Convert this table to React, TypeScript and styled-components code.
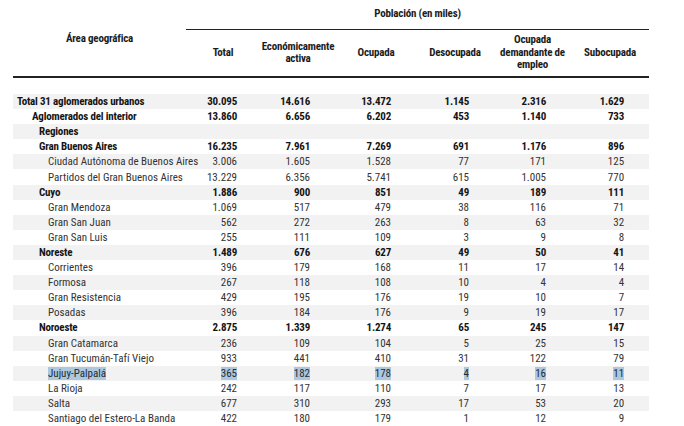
import React from "react";
import styled, { createGlobalStyle } from "styled-components";

const Global = createGlobalStyle`
  html, body {
    margin: 0;
    background: #fff;
  }
  body {
    font-family: Roboto, "Open Sans", "Liberation Sans", sans-serif;
    font-stretch: 75%;
    color: #2b2b2b;
  }
`;

const Page = styled.div`
  padding: 0 0 0 13px;
`;

const Table = styled.table`
  border-collapse: collapse;
  table-layout: fixed;
  width: 636px;
  font-size: 11px;
`;

const HeadCell = styled.th<{ $top?: boolean }>`
  font-weight: bold;
  letter-spacing: -0.2px;
  color: #1c1c1c;
  text-align: center;
  vertical-align: middle;
  line-height: 12.5px;
  padding: 0;
  height: ${(p) => (p.$top ? "29px" : "46px")};
  border-bottom: ${(p) => (p.$top ? "1px solid #222" : "2px solid #222")};
`;

const AreaHead = styled.th`
  font-weight: bold;
  letter-spacing: -0.2px;
  color: #1c1c1c;
  text-align: center;
  vertical-align: middle;
  padding: 0;
  border-bottom: 2px solid #222;
`;

const Spacer = styled.tr`
  height: 17px;
`;

const Row = styled.tr<{ $bold?: boolean }>`
  height: 15.1px;
  font-weight: ${(p) => (p.$bold ? "bold" : "normal")};
  letter-spacing: ${(p) => (p.$bold ? "-0.2px" : "0")};
  color: ${(p) => (p.$bold ? "#151515" : "#333")};
  &:nth-child(even) {
    background: #f2f2f2;
  }
`;

const Label = styled.td<{ $level: number }>`
  padding: 0 0 0 ${(p) => [4, 19, 26, 35][p.$level]}px;
  white-space: nowrap;
  line-height: 15px;
`;

const Num = styled.td<{ $pad: number }>`
  text-align: right;
  padding: 0 ${(p) => p.$pad}px 0 0;
  line-height: 15px;
`;

const Mark = styled.span`
  background: #adc8dd;
  color: #1f2b36;
`;

type Item = {
  label: string;
  level: number;
  bold?: boolean;
  marked?: boolean;
  values: string[];
};

const rows: Item[] = [
  { label: "Total 31 aglomerados urbanos", level: 0, bold: true, values: ["30.095", "14.616", "13.472", "1.145", "2.316", "1.629"] },
  { label: "Aglomerados del interior", level: 1, bold: true, values: ["13.860", "6.656", "6.202", "453", "1.140", "733"] },
  { label: "Regiones", level: 2, bold: true, values: [] },
  { label: "Gran Buenos Aires", level: 2, bold: true, values: ["16.235", "7.961", "7.269", "691", "1.176", "896"] },
  { label: "Ciudad Autónoma de Buenos Aires", level: 3, values: ["3.006", "1.605", "1.528", "77", "171", "125"] },
  { label: "Partidos del Gran Buenos Aires", level: 3, values: ["13.229", "6.356", "5.741", "615", "1.005", "770"] },
  { label: "Cuyo", level: 2, bold: true, values: ["1.886", "900", "851", "49", "189", "111"] },
  { label: "Gran Mendoza", level: 3, values: ["1.069", "517", "479", "38", "116", "71"] },
  { label: "Gran San Juan", level: 3, values: ["562", "272", "263", "8", "63", "32"] },
  { label: "Gran San Luis", level: 3, values: ["255", "111", "109", "3", "9", "8"] },
  { label: "Noreste", level: 2, bold: true, values: ["1.489", "676", "627", "49", "50", "41"] },
  { label: "Corrientes", level: 3, values: ["396", "179", "168", "11", "17", "14"] },
  { label: "Formosa", level: 3, values: ["267", "118", "108", "10", "4", "4"] },
  { label: "Gran Resistencia", level: 3, values: ["429", "195", "176", "19", "10", "7"] },
  { label: "Posadas", level: 3, values: ["396", "184", "176", "9", "19", "17"] },
  { label: "Noroeste", level: 2, bold: true, values: ["2.875", "1.339", "1.274", "65", "245", "147"] },
  { label: "Gran Catamarca", level: 3, values: ["236", "109", "104", "5", "25", "15"] },
  { label: "Gran Tucumán-Tafí Viejo", level: 3, values: ["933", "441", "410", "31", "122", "79"] },
  { label: "Jujuy-Palpalá", level: 3, marked: true, values: ["365", "182", "178", "4", "16", "11"] },
  { label: "La Rioja", level: 3, values: ["242", "117", "110", "7", "17", "13"] },
  { label: "Salta", level: 3, values: ["677", "310", "293", "17", "53", "20"] },
  { label: "Santiago del Estero-La Banda", level: 3, values: ["422", "180", "179", "1", "12", "9"] },
];

const widths = [173, 74, 76, 80, 78, 77, 78];
const pads = [23, 26, 25, 25, 25, 25];

const heads = [
  ["Total"],
  ["Económicamente", "activa"],
  ["Ocupada"],
  ["Desocupada"],
  ["Ocupada", "demandante de", "empleo"],
  ["Subocupada"],
];

const App = () => {
  return (
    <Page>
      <Global />
      <Table>
        <colgroup>
          {widths.map((w, i) => (
            <col key={i} style={{ width: w }} />
          ))}
        </colgroup>
        <thead>
          <tr>
            <AreaHead rowSpan={2}>Área geográfica</AreaHead>
            <HeadCell $top colSpan={6}>
              Población (en miles)
            </HeadCell>
          </tr>
          <tr>
            {heads.map((h, i) => (
              <HeadCell key={i}>
                {h.map((line, j) => (
                  <div key={j}>{line}</div>
                ))}
              </HeadCell>
            ))}
          </tr>
        </thead>
        <tbody>
          <Spacer />
          {rows.map((r) => (
            <Row key={r.label} $bold={r.bold}>
              <Label $level={r.level}>{r.marked ? <Mark>{r.label}</Mark> : r.label}</Label>
              {[0, 1, 2, 3, 4, 5].map((i) => (
                <Num key={i} $pad={pads[i]}>
                  {r.marked && r.values[i] ? <Mark>{r.values[i]}</Mark> : r.values[i]}
                </Num>
              ))}
            </Row>
          ))}
        </tbody>
      </Table>
    </Page>
  );
};

export default App;
